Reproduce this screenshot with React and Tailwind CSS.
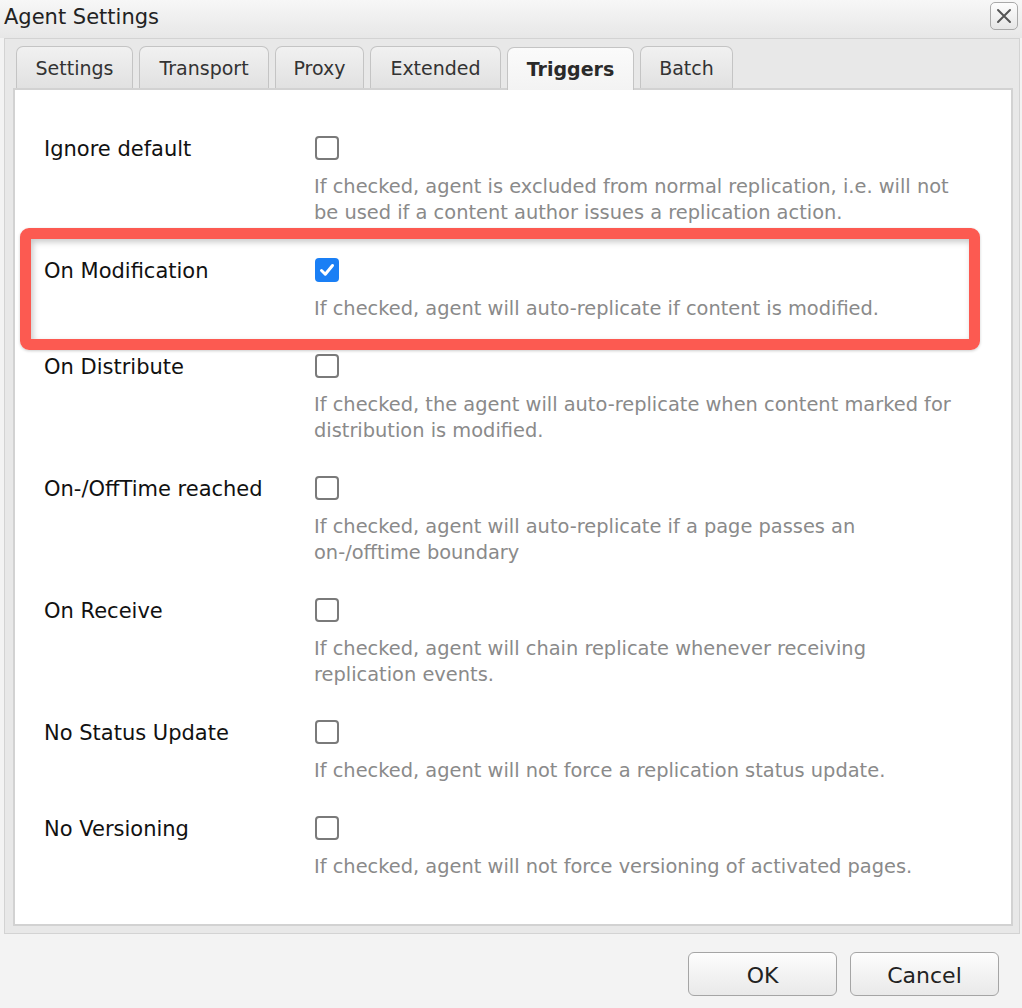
import React from 'react';

const tabs = [
  { name: 'Settings', w: 'w-[117px]' },
  { name: 'Transport', w: 'w-[130px]' },
  { name: 'Proxy', w: 'w-[89px]' },
  { name: 'Extended', w: 'w-[131px]' },
  { name: 'Triggers', w: 'w-[127px]', active: true },
  { name: 'Batch', w: 'w-[93px]' },
];

const rows = [
  {
    label: 'Ignore default',
    lines: [
      'If checked, agent is excluded from normal replication, i.e. will not',
      'be used if a content author issues a replication action.',
    ],
  },
  {
    label: 'On Modification',
    checked: true,
    highlight: true,
    lines: ['If checked, agent will auto-replicate if content is modified.'],
  },
  {
    label: 'On Distribute',
    lines: [
      'If checked, the agent will auto-replicate when content marked for',
      'distribution is modified.',
    ],
  },
  {
    label: 'On-/OffTime reached',
    lines: [
      'If checked, agent will auto-replicate if a page passes an',
      'on-/offtime boundary',
    ],
  },
  {
    label: 'On Receive',
    lines: [
      'If checked, agent will chain replicate whenever receiving',
      'replication events.',
    ],
  },
  {
    label: 'No Status Update',
    lines: ['If checked, agent will not force a replication status update.'],
  },
  {
    label: 'No Versioning',
    lines: ['If checked, agent will not force versioning of activated pages.'],
  },
];

function Checkbox({ checked }) {
  if (checked) {
    return (
      <div className="w-[24px] h-[24px] rounded-[4px] bg-[#1a7ff5] flex items-center justify-center ml-[1px]">
        <svg width="16" height="16" viewBox="0 0 16 16">
          <path d="M2.5 8.5 L6.3 12.2 L13.5 3.5" fill="none" stroke="white" strokeWidth="3" strokeLinecap="round" strokeLinejoin="round" />
        </svg>
      </div>
    );
  }
  return <div className="w-[24px] h-[24px] rounded-[4px] border-2 border-[#7a7a7a] bg-white ml-[1px]" />;
}

function Row({ row }) {
  return (
    <div className="relative flex pl-[29px] pt-[18px] pb-[14px]">
      {row.highlight && (
        <div className="absolute left-[5px] top-[-12px] w-[960px] h-[122px] rounded-[9px] border-[11px] border-[#fc5a51] shadow-[inset_2px_3px_6px_rgba(0,0,0,0.22),0_1px_3px_rgba(0,0,0,0.2)]" />
      )}
      <div className="w-[270px] h-[24px] leading-[24px] text-[21px] text-[#111] pt-[1px]">{row.label}</div>
      <div className="flex flex-col">
        <Checkbox checked={row.checked} />
        <div className="mt-[14px] text-[19.4px] leading-[26px] text-[#8a8a8a] whitespace-nowrap">
          {row.lines.map((l, i) => (
            <div key={i}>{l}</div>
          ))}
        </div>
      </div>
    </div>
  );
}

export default function App() {
  return (
    <div className="w-[1022px] h-[1008px] bg-[#f3f3f3] flex flex-col overflow-hidden" style={{ fontFamily: '"DejaVu Sans", Verdana, sans-serif' }}>
      {/* title bar */}
      <div className="h-[38px] flex items-center justify-between pl-[4px] pr-[4px] bg-gradient-to-b from-[#f7f7f7] to-[#e7e7e7]">
        <div className="text-[21px] text-[#222] -mt-[3px]">Agent Settings</div>
        <div className="w-[28px] h-[28px] -mt-[6px] rounded-[5px] border border-[#a9a9a9] bg-gradient-to-b from-[#fdfdfd] to-[#e6e6e6] flex items-center justify-center">
          <svg width="18" height="18" viewBox="0 0 18 18">
            <path d="M3 3 L15 15 M15 3 L3 15" stroke="#555" strokeWidth="2" strokeLinecap="round" />
          </svg>
        </div>
      </div>

      {/* tab panel */}
      <div className="ml-[4px] mr-[2px] h-[896px] border border-[#d3d3d3] bg-[#e8e8e8] pl-[8px] pr-[6px] pt-[7px] pb-[7px] flex flex-col">
        <div className="flex gap-[6px] pl-[3px] h-[42px] items-end">
          {tabs.map((t) => (
            <div
              key={t.name}
              className={
                t.active
                  ? `${t.w} h-[43px] -mb-[2px] pt-[1px] relative z-10 rounded-t-[7px] border border-b-0 border-[#c4c4c4] bg-gradient-to-b from-[#fbfbfb] to-[#f3f3f3] flex items-center justify-center text-[19px] font-bold text-[#2a2a2a]`
                  : `${t.w} h-[42px] pt-[2px] rounded-t-[7px] border border-b-0 border-[#c4c4c4] bg-gradient-to-b from-[#f1f1f1] to-[#e1e1e1] flex items-center justify-center text-[19px] text-[#333]`
              }
            >
              {t.name}
            </div>
          ))}
        </div>
        <div className="flex-1 bg-white border-2 border-[#d2d2d2] pt-[28px]">
          {rows.map((r) => (
            <Row key={r.label} row={r} />
          ))}
        </div>
      </div>

      {/* buttons */}
      <div className="flex justify-end gap-[13px] pt-[18px] pr-[23px]">
        <button className="w-[149px] h-[44px] pt-[2px] rounded-[6px] border border-[#a5a5a5] bg-gradient-to-b from-[#fdfdfd] to-[#e9e9e9] text-[22px] text-[#222]">OK</button>
        <button className="w-[149px] h-[44px] pt-[2px] rounded-[6px] border border-[#a5a5a5] bg-gradient-to-b from-[#fdfdfd] to-[#e9e9e9] text-[22px] text-[#222]">Cancel</button>
      </div>
    </div>
  );
}
